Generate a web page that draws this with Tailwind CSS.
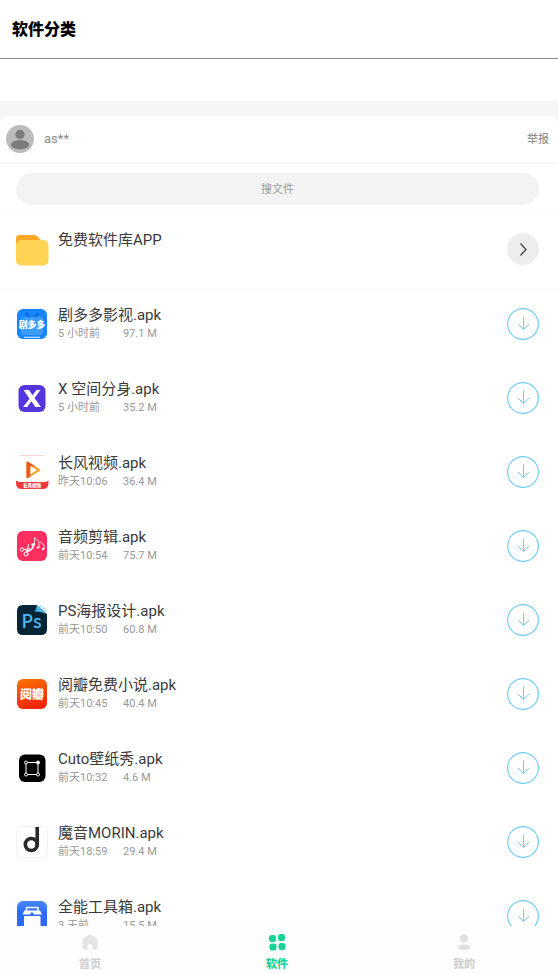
<!DOCTYPE html>
<html lang="zh-CN">
<head>
  <meta charset="UTF-8" />
  <meta name="viewport" content="width=device-width, initial-scale=1" />
  <title>软件分类</title>
  <script src="https://cdn.jsdelivr.net/npm/@tailwindcss/browser@4"></script>
</head>
<body class="h-screen flex flex-col overflow-hidden bg-white font-[Roboto,'Noto_Sans_CJK_SC',sans-serif] text-[#3a3a3a]">
  <header class="shrink-0 h-[59px] flex items-center px-3 pt-[2px] border-b border-[#8c8c8c]">
    <h1 class="text-base font-black text-black">软件分类</h1>
  </header>

  <main class="flex-1 min-h-0 overflow-hidden pt-[42px]">
    <div class="bg-[#f6f6f6] pt-[15px]">
      <section class="bg-white rounded-t-lg">
        <!-- Uploader -->
        <div class="flex items-center h-12 pl-[6px] pr-[9px] border-b-2 border-[#f7f7f7]">
          <svg class="size-7" viewBox="0 0 28 28">
            <circle cx="14" cy="14" r="14" fill="#bcbcbc" />
            <circle cx="14" cy="9.500" r="4.700" fill="#7c7c7c" />
            <ellipse cx="14" cy="19.700" rx="9.300" ry="4.700" fill="#7c7c7c" />
          </svg>
          <span class="ml-[10px] text-[13px] text-[#8c8c8c]">as**</span>
          <button type="button" class="ml-auto pt-[2px] text-[11px] text-[#808080]">举报</button>
        </div>

        <!-- Search -->
        <form class="h-[50px] pl-4 pr-[19px] pt-[9px] border-b border-[#f7f7f7]">
          <input type="text" aria-label="搜文件" placeholder="搜文件" class="block w-full h-8 rounded-full bg-[#f3f3f3] text-center text-[11px] placeholder:text-[#999999] outline-none" />
        </form>

        <ul>
          <li class="flex items-start h-[75px] pl-4 pr-[19px] pt-4 border-b border-[#f7f7f7]">
            <svg class="w-[33px] h-8 mt-1 shrink-0" viewBox="0 0 33 32">
              <path d="M0 10V4.500Q0 1 3.500 1H18Q20 1 21.500 2.500L26 7V10Z" fill="#f9a825" />
              <rect y="6" width="32.500" height="25.500" rx="5" fill="#ffd454" />
            </svg>
            <h2 class="ml-[9px] text-[15px] leading-5">免费软件库APP</h2>
            <button type="button" aria-label="打开" class="ml-auto mt-[3px] size-8 rounded-full bg-[#ededed] flex items-center justify-center">
              <svg class="size-4" viewBox="0 0 16 16" fill="none" stroke="#444444" stroke-width="1.300"><path d="M5.500 2.500L11 8.500L5.500 14.500" /></svg>
            </button>
          </li>

          <li class="flex items-start h-[74px] pl-4 pr-[19px] pt-4">
            <svg class="size-8 mt-[3px] shrink-0" viewBox="0 0 32 32">
              <rect x="1" y="1" width="30" height="30" rx="6" fill="#1684fb" />
              <path d="M10 5L14 10M22 5L18 10" stroke="#0c64dc" stroke-width="2" />
              <rect x="5" y="9" width="22" height="18" rx="2.500" fill="#3b9dfa" />
              <path d="M8 29.300H24" stroke="#c8e6ff" stroke-width="1.200" />
              <text x="16" y="19.500" text-anchor="middle" font-size="8.800" font-weight="900" fill="#fff">剧多多</text>
            </svg>
            <div class="ml-[10px]">
              <h2 class="text-[15px] leading-5">剧多多影视.apk</h2>
              <p class="flex text-[11px] leading-[18px] text-[#999999]"><span class="w-[65px]">5 小时前</span><span>97.1 M</span></p>
            </div>
            <button type="button" aria-label="下载" class="ml-auto mt-[3px] size-8 text-[#70cdf8]">
              <svg viewBox="0 0 32 32" fill="none" stroke="currentColor"><circle cx="16" cy="16" r="15.400" stroke-width="1.200" /><path d="M16.500 8.500V21M11 16L16.500 21.500L22 16" /></svg>
            </button>
          </li>

          <li class="flex items-start h-[74px] pl-4 pr-[19px] pt-4">
            <svg class="size-8 mt-[3px] shrink-0" viewBox="0 0 32 32">
              <rect x="2.500" y="3" width="27" height="27" rx="6" fill="#5436df" />
              <path d="M7.500 8H13L16.500 13.300L20.500 8H24.500L18.500 16L25 25H19.300L15.500 19.300L11.200 25H7L13.500 16.700Z" fill="#fff" />
            </svg>
            <div class="ml-[10px]">
              <h2 class="text-[15px] leading-5">X 空间分身.apk</h2>
              <p class="flex text-[11px] leading-[18px] text-[#999999]"><span class="w-[65px]">5 小时前</span><span>35.2 M</span></p>
            </div>
            <button type="button" aria-label="下载" class="ml-auto mt-[3px] size-8 text-[#70cdf8]">
              <svg viewBox="0 0 32 32" fill="none" stroke="currentColor"><circle cx="16" cy="16" r="15.400" stroke-width="1.200" /><path d="M16.500 8.500V21M11 16L16.500 21.500L22 16" /></svg>
            </button>
          </li>

          <li class="flex items-start h-[74px] pl-4 pr-[19px] pt-4">
            <svg class="size-8 mt-[3px] shrink-0 overflow-visible" viewBox="0 0 32 32">
              <path d="M4 -.500H28" stroke="#fbd5d0" />
              <path d="M0 24.500Q2 26 5 26H27.500Q31 26 32.500 24.500V27Q32.500 33 26.500 33H6Q0 33 0 27Z" fill="#ee3a3a" />
              <path d="M11.500 5.500Q10.500 5 10.500 6.500V21Q10.500 22.500 12 22L23.500 15Q24.500 14 23.500 13Z" fill="#ff9c1c" />
              <path d="M11.500 5.500Q10.500 5 10.500 6.500V21Q10.500 22.500 12 22L14.500 20V10.500L19 10Z" fill="#ea5a22" />
              <path d="M14.500 10V18.500L21 14Z" fill="#fff" />
              <text x="16" y="31" text-anchor="middle" font-size="4.500" font-weight="900" fill="#fff">长风视频</text>
            </svg>
            <div class="ml-[10px]">
              <h2 class="text-[15px] leading-5">长风视频.apk</h2>
              <p class="flex text-[11px] leading-[18px] text-[#999999]"><span class="w-[65px]">昨天10:06</span><span>36.4 M</span></p>
            </div>
            <button type="button" aria-label="下载" class="ml-auto mt-[3px] size-8 text-[#70cdf8]">
              <svg viewBox="0 0 32 32" fill="none" stroke="currentColor"><circle cx="16" cy="16" r="15.400" stroke-width="1.200" /><path d="M16.500 8.500V21M11 16L16.500 21.500L22 16" /></svg>
            </button>
          </li>

          <li class="flex items-start h-[74px] pl-4 pr-[19px] pt-4">
            <svg class="size-8 mt-[3px] shrink-0" viewBox="0 0 32 32">
              <rect x="1" y="1" width="30" height="30" rx="6" fill="#fe2f60" />
              <g fill="none" stroke="#fff" stroke-linecap="round">
                <circle cx="6.200" cy="19.500" r="1.800" />
                <circle cx="10" cy="24" r="2" />
                <path d="M8 19.700L13.500 18.500M10.700 22L12.500 14.500" />
                <path d="M11 21Q16 21 18 14.500" stroke-width="1.800" />
                <path d="M18.500 14.500V7.500L23 11.500V17M24.500 12L28 15V19" stroke-width=".8" />
              </g>
              <g fill="#fff">
                <ellipse cx="17" cy="14.500" rx="1.800" ry="1.300" />
                <ellipse cx="22" cy="17.500" rx="1.500" ry="1.100" />
                <circle cx="27" cy="19.200" r="1.100" />
              </g>
            </svg>
            <div class="ml-[10px]">
              <h2 class="text-[15px] leading-5">音频剪辑.apk</h2>
              <p class="flex text-[11px] leading-[18px] text-[#999999]"><span class="w-[65px]">前天10:54</span><span>75.7 M</span></p>
            </div>
            <button type="button" aria-label="下载" class="ml-auto mt-[3px] size-8 text-[#70cdf8]">
              <svg viewBox="0 0 32 32" fill="none" stroke="currentColor"><circle cx="16" cy="16" r="15.400" stroke-width="1.200" /><path d="M16.500 8.500V21M11 16L16.500 21.500L22 16" /></svg>
            </button>
          </li>

          <li class="flex items-start h-[74px] pl-4 pr-[19px] pt-4">
            <svg class="size-8 mt-[3px] shrink-0" viewBox="0 0 32 32">
              <path d="M7 1H20.500L31 10V25Q31 31 25 31H7Q1 31 1 25V7Q1 1 7 1Z" fill="#052536" />
              <path d="M21 1L30.500 10Q25 7 18.500 7.500Q20.500 5 21 1Z" fill="#4bb5ee" />
              <path d="M24 1.500L30.500 7M27 5L29.500 3" stroke="#8ad6fa" stroke-width="1.300" stroke-dasharray="2 1" />
              <text x="15.500" y="24" text-anchor="middle" font-family="Noto Sans CJK SC" font-size="18" font-weight="500" fill="#4db8f8">Ps</text>
            </svg>
            <div class="ml-[10px]">
              <h2 class="text-[15px] leading-5">PS海报设计.apk</h2>
              <p class="flex text-[11px] leading-[18px] text-[#999999]"><span class="w-[65px]">前天10:50</span><span>60.8 M</span></p>
            </div>
            <button type="button" aria-label="下载" class="ml-auto mt-[3px] size-8 text-[#70cdf8]">
              <svg viewBox="0 0 32 32" fill="none" stroke="currentColor"><circle cx="16" cy="16" r="15.400" stroke-width="1.200" /><path d="M16.500 8.500V21M11 16L16.500 21.500L22 16" /></svg>
            </button>
          </li>

          <li class="flex items-start h-[74px] pl-4 pr-[19px] pt-4">
            <svg class="size-8 mt-[3px] shrink-0" viewBox="0 0 32 32">
              <defs>
                <linearGradient id="orange" x1="0" y1="0" x2=".3" y2="1"><stop stop-color="#fb7303" /><stop offset="1" stop-color="#f02808" /></linearGradient>
              </defs>
              <rect x="1" y="1" width="30" height="30" rx="6" fill="url(#orange)" />
              <text x="16" y="20.500" text-anchor="middle" font-size="12" font-weight="900" fill="#fff">阅瓣</text>
            </svg>
            <div class="ml-[10px]">
              <h2 class="text-[15px] leading-5">阅瓣免费小说.apk</h2>
              <p class="flex text-[11px] leading-[18px] text-[#999999]"><span class="w-[65px]">前天10:45</span><span>40.4 M</span></p>
            </div>
            <button type="button" aria-label="下载" class="ml-auto mt-[3px] size-8 text-[#70cdf8]">
              <svg viewBox="0 0 32 32" fill="none" stroke="currentColor"><circle cx="16" cy="16" r="15.400" stroke-width="1.200" /><path d="M16.500 8.500V21M11 16L16.500 21.500L22 16" /></svg>
            </button>
          </li>

          <li class="flex items-start h-[74px] pl-4 pr-[19px] pt-4">
            <svg class="size-8 mt-[3px] shrink-0" viewBox="0 0 32 32">
              <rect x="3" y="2.500" width="26.500" height="27.500" rx="6" fill="#000" />
              <g fill="#000" stroke="#fff">
                <path d="M10 10.500H22V22.500H10Z" />
                <circle cx="10" cy="10.500" r="1.500" />
                <circle cx="10" cy="22.500" r="1.500" />
                <circle cx="22" cy="22.500" r="1.500" />
                <circle cx="22" cy="10.500" r="1.500" fill="#fff" />
              </g>
            </svg>
            <div class="ml-[10px]">
              <h2 class="text-[15px] leading-5">Cuto壁纸秀.apk</h2>
              <p class="flex text-[11px] leading-[18px] text-[#999999]"><span class="w-[65px]">前天10:32</span><span>4.6 M</span></p>
            </div>
            <button type="button" aria-label="下载" class="ml-auto mt-[3px] size-8 text-[#70cdf8]">
              <svg viewBox="0 0 32 32" fill="none" stroke="currentColor"><circle cx="16" cy="16" r="15.400" stroke-width="1.200" /><path d="M16.500 8.500V21M11 16L16.500 21.500L22 16" /></svg>
            </button>
          </li>

          <li class="flex items-start h-[74px] pl-4 pr-[19px] pt-4">
            <svg class="size-8 mt-[3px] shrink-0" viewBox="0 0 32 32">
              <rect x=".500" y=".500" width="31" height="31" rx="6" fill="#fff" stroke="#f0f0f0" />
              <g fill="none" stroke="#2a2a2a" stroke-width="3.600">
                <circle cx="15.300" cy="18.500" r="6" />
                <path d="M21.200 1V21" />
              </g>
            </svg>
            <div class="ml-[10px]">
              <h2 class="text-[15px] leading-5">魔音MORIN.apk</h2>
              <p class="flex text-[11px] leading-[18px] text-[#999999]"><span class="w-[65px]">前天18:59</span><span>29.4 M</span></p>
            </div>
            <button type="button" aria-label="下载" class="ml-auto mt-[3px] size-8 text-[#70cdf8]">
              <svg viewBox="0 0 32 32" fill="none" stroke="currentColor"><circle cx="16" cy="16" r="15.400" stroke-width="1.200" /><path d="M16.500 8.500V21M11 16L16.500 21.500L22 16" /></svg>
            </button>
          </li>

          <li class="flex items-start h-[74px] pl-4 pr-[19px] pt-4">
            <svg class="size-8 mt-[3px] shrink-0" viewBox="0 0 32 32">
              <defs>
                <linearGradient id="blue" x1="0" y1="0" x2="0" y2="1"><stop stop-color="#4786f8" /><stop offset=".4" stop-color="#2c6bfa" /></linearGradient>
              </defs>
              <rect x="1" y="1" width="30" height="30" rx="6" fill="url(#blue)" />
              <path d="M10.500 12V7.500H22V12" fill="none" stroke="#fff" stroke-width="1.500" />
              <path d="M8.500 10.500H24L26 14.500H6.500Z" fill="#fff" />
              <rect x="8" y="16" width="16.500" height="12" rx="1" fill="#fff" />
              <rect x="14.500" y="12.500" width="3" height="3" rx="1" fill="#2c6bfa" />
            </svg>
            <div class="ml-[10px]">
              <h2 class="text-[15px] leading-5">全能工具箱.apk</h2>
              <p class="flex text-[11px] leading-[18px] text-[#999999]"><span class="w-[65px]">3 天前</span><span>15.5 M</span></p>
            </div>
            <button type="button" aria-label="下载" class="ml-auto mt-[3px] size-8 text-[#70cdf8]">
              <svg viewBox="0 0 32 32" fill="none" stroke="currentColor"><circle cx="16" cy="16" r="15.400" stroke-width="1.200" /><path d="M16.500 8.500V21M11 16L16.500 21.500L22 16" /></svg>
            </button>
          </li>
        </ul>
      </section>
    </div>
  </main>

  <nav class="shrink-0 h-12 flex justify-between pl-[79px] pr-[83px] pt-[7px] bg-[#fefefe] text-[11px] leading-4 font-black text-[#d2d2d2]">
    <a href="#home" class="flex flex-col items-center gap-[6px]">
      <svg class="size-[18px]" viewBox="0 0 18 18"><path d="M8 1.500Q9 .8 10 1.500L15.500 5.500Q16.500 6.200 16.500 7.500V14.500Q16.500 16.500 14.500 16.500H11.500V13Q11.500 11 9 11Q6.500 11 6.500 13V16.500H3.500Q1.500 16.500 1.500 14.500V7.500Q1.500 6.200 2.500 5.500Z" fill="#e4e4e4" /></svg>
      首页
    </a>
    <a href="#apps" class="flex flex-col items-center gap-[6px] text-[#1bd397]">
      <svg class="size-[18px]" viewBox="0 0 18 18" fill="currentColor">
        <rect x="1" y="2" width="7" height="7" rx="2.500" />
        <rect x="10" y="1" width="7" height="7" rx="2.500" />
        <rect x="1.500" y="10.500" width="7" height="7" rx="2.500" />
        <rect x="10.500" y="10" width="7" height="7" rx="2.500" />
      </svg>
      软件
    </a>
    <a href="#me" class="flex flex-col items-center gap-[6px]">
      <svg class="size-[18px]" viewBox="0 0 18 18" fill="#e0e0e0"><circle cx="9" cy="5.500" r="4.200" /><ellipse cx="9" cy="14.300" rx="6.500" ry="2.700" /></svg>
      我的
    </a>
  </nav>
</body>
</html>
